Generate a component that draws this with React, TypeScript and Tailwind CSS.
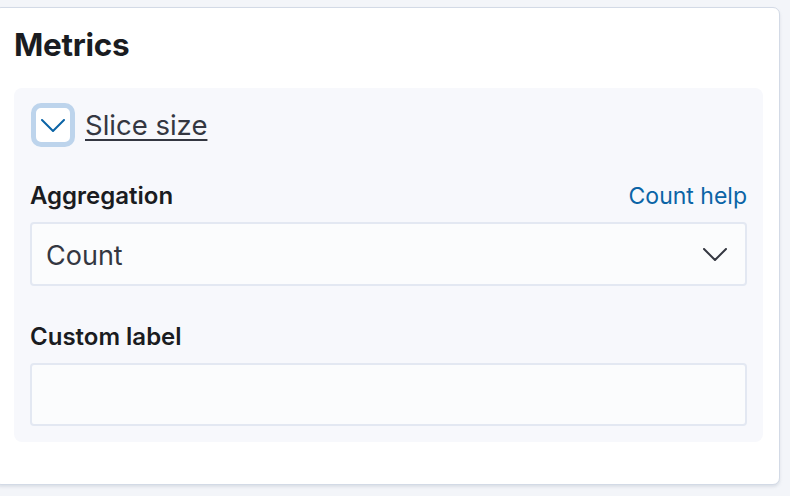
import React from 'react';

function Chevron({ className }: { className?: string }) {
  return (
    <svg viewBox="0 0 24 13" className={className} fill="none" stroke="currentColor" strokeWidth="2" strokeLinecap="round" strokeLinejoin="round">
      <path d="M1 1l11 11L23 1" />
    </svg>
  );
}

export default function App() {
  return (
    <div className="min-h-[496px] bg-[#f3f5f9] pt-[7px] pr-[10px] pb-[11px] font-['Inter',sans-serif]">
      <div className="-ml-[6px] rounded-[7px] border border-[#d3dae6] bg-white pl-[19px] pr-[16px] pt-[17px] pb-[42px] shadow-[0_2px_3px_rgba(152,162,179,0.25)]">
        <h2 className="h-[40px] text-[31.5px] font-bold leading-[40px] tracking-[-0.01em] text-[#1a1c21]">Metrics</h2>

        <div className="mt-[23px] rounded-[8px] bg-[#f7f8fc] px-[16px] pt-[15px] pb-[16px]">
          <div className="flex h-[44px] items-center">
            <button className="ml-[1px] flex h-[44px] w-[44px] items-center justify-center rounded-[10px] border-[5px] border-[#bdd4ec] bg-white">
              <Chevron className="h-[13px] w-[24px] text-[#0b64a6]" />
            </button>
            <span className="ml-[10px] text-[27.5px] leading-[32px] text-[#343741] underline decoration-[2px] underline-offset-[4px]">
              Slice size
            </span>
          </div>

          <div className="mt-[35px] flex h-[28px] items-center justify-between">
            <label className="text-[24px] font-semibold leading-[28px] text-[#1a1c21]">Aggregation</label>
            <a className="text-[23px] leading-[28px] text-[#0b64a6]">Count help</a>
          </div>
          <div className="mt-[12px] flex h-[64px] items-center justify-between rounded-[4px] border-2 border-[#e3e8f2] bg-[#fbfcfd] pl-[14px] pr-[18px]">
            <span className="pt-[4px] text-[27px] leading-[32px] text-[#343741]">Count</span>
            <Chevron className="h-[13px] w-[24px] text-[#343741]" />
          </div>

          <label className="mt-[37px] block h-[28px] text-[24px] font-semibold leading-[28px] text-[#1a1c21]">Custom label</label>
          <div className="mt-[12px] h-[63px] rounded-[4px] border-2 border-[#e3e8f2] bg-[#fbfcfd]" />
        </div>
      </div>
    </div>
  );
}
